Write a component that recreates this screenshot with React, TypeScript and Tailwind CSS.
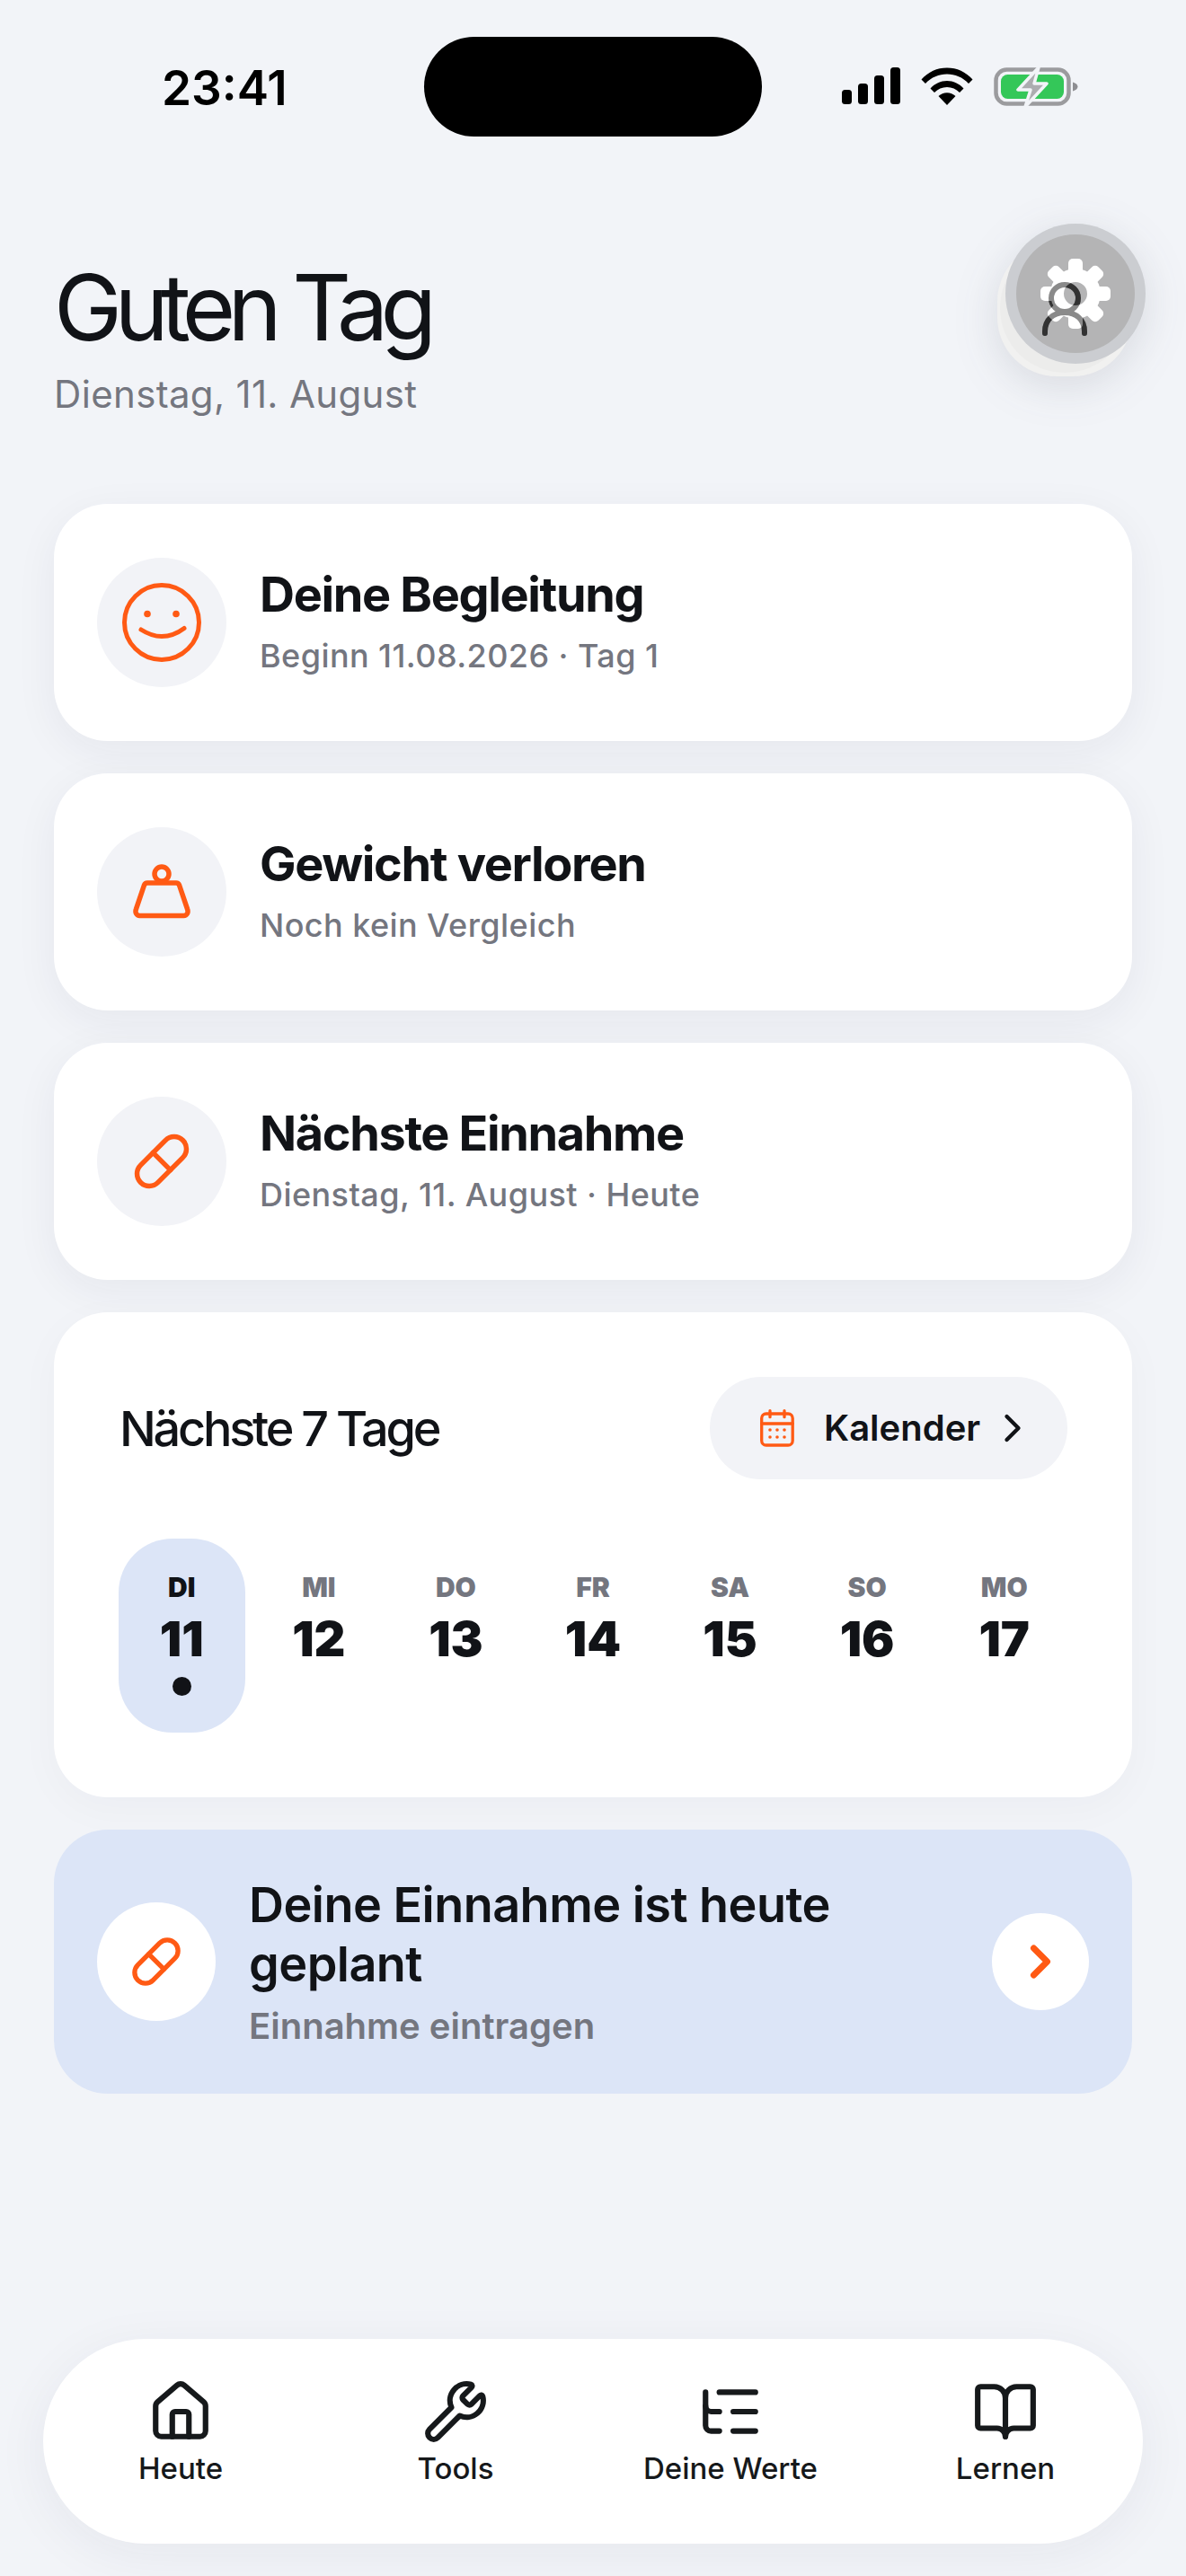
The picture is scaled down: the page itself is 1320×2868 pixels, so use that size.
import React from "react";
import { House, Wrench, ListTree, BookOpen, Pill, ChevronRight } from "lucide-react";

const ORANGE = "#FF5A14";

function SignalIcon() {
  return (
    <svg width="65" height="41" viewBox="0 0 65 41" fill="#000">
      <rect x="0" y="25" width="11" height="16" rx="3.5" />
      <rect x="18" y="18" width="11" height="23" rx="3.5" />
      <rect x="36" y="9" width="11" height="32" rx="3.5" />
      <rect x="54" y="0" width="11" height="41" rx="3.5" />
    </svg>
  );
}

function WifiIcon() {
  return (
    <svg width="58" height="42" viewBox="0 0 58 42" fill="#000">
      <path d="M0.5 13.5C8 5 18 0.5 29 0.5s21 4.5 28.500 13l-4.500 4.500C46.500 11 38 7.500 29 7.500S11.500 11 5 18Z" />
      <path d="M10.500 23.500C15.500 18 22 15 29 15s13.500 3 18.500 8.500L43 28c-3.800-3.900-8.700-6-14-6s-10.200 2.100-14 6Z" />
      <path d="M19.500 32c2.600-2.400 5.900-3.800 9.500-3.800s6.900 1.400 9.500 3.800L29 42Z" />
    </svg>
  );
}

function BatteryIcon() {
  return (
    <svg width="94" height="44" viewBox="0 0 94 44">
      <rect x="2.500" y="2.500" width="81" height="38" rx="12" fill="none" stroke="#9B9B9E" strokeWidth="4.500" />
      <rect x="8" y="8" width="70" height="27" rx="7.500" fill="#34C759" />
      <path d="M88 16.500c3.500 1 5.500 2.800 5.500 5s-2 4-5.500 5Z" fill="#8E8E92" />
      <path d="M50 0 27 25h14l-6 19 24-26H45Z" fill="#ACACB0" stroke="#F2F4F8" strokeWidth="3.500" strokeLinejoin="round" />
    </svg>
  );
}

function SmileIcon() {
  return (
    <svg width="88" height="88" viewBox="0 0 88 88" fill="none" stroke={ORANGE} strokeWidth="5" strokeLinecap="round">
      <circle cx="44" cy="44" r="41.500" />
      <circle cx="28" cy="34.500" r="3.800" fill={ORANGE} stroke="none" />
      <circle cx="60" cy="34.500" r="3.800" fill={ORANGE} stroke="none" />
      <path d="M21 52c7 4.500 15 7.500 23 7.500s17-3 25-9" />
    </svg>
  );
}

function WeightIcon() {
  return (
    <svg width="64" height="62" viewBox="0 0 64 62" fill="none" stroke={ORANGE} strokeWidth="5.500" strokeLinejoin="round" strokeLinecap="round">
      <circle cx="32" cy="11" r="8" />
      <path d="M16 21h32a4 4 0 0 1 3.500 2.400L60.500 50c1.500 4-.5 7.500-4 7.500h-49c-3.500 0-5.500-3.500-4-7.500l9-26.600A4 4 0 0 1 16 21Z" />
    </svg>
  );
}

function CalendarIcon() {
  return (
    <svg width="38" height="42" viewBox="0 0 38 42" fill="none" stroke={ORANGE} strokeWidth="3.300" strokeLinecap="round">
      <rect x="1.700" y="5" width="34.500" height="35" rx="5" />
      <path d="M11 1.700v7M27 1.700v7M1.700 16h34.500" />
      <g fill={ORANGE} stroke="none">
        <circle cx="11" cy="23" r="1.800" />
        <circle cx="19" cy="23" r="1.800" />
        <circle cx="27" cy="23" r="1.800" />
        <circle cx="11" cy="31" r="1.800" />
        <circle cx="19" cy="31" r="1.800" />
        <circle cx="27" cy="31" r="1.800" />
      </g>
    </svg>
  );
}

function PersonShape({ stroke }: { stroke: string }) {
  return (
    <g fill="none" stroke={stroke} strokeWidth="6" strokeLinecap="round">
      <circle cx="95" cy="102" r="15" />
      <path d="M73 141v-2c0-13 9-21 22-21s22 8 22 21v2" />
    </g>
  );
}

function AvatarOverlay() {
  const teeth = [0, 45, 90, 135, 180, 225, 270, 315];
  return (
    <div className="absolute left-[1090px] top-[230px] drop-shadow-[0_10px_24px_rgba(60,64,80,0.14)]">
      <svg width="200" height="200" viewBox="0 0 200 200">
        <rect x="20" y="40" width="150" height="149" rx="66" fill="#F1F1F0" />
        <circle cx="95" cy="113" r="72" fill="#ECECEB" />
        <circle cx="107" cy="97" r="78" fill="#C9CBD0" fillOpacity="0.97" />
        <circle cx="107" cy="97" r="66" fill="#B4B4B5" />
        <PersonShape stroke="#5C5C5C" />
        <g fill="#FFFFFF">
          <path
            fillRule="evenodd"
            d="M107 69a28 28 0 1 1 0 56 28 28 0 1 1 0-56Zm0 15a13 13 0 1 0 0 26 13 13 0 1 0 0-26Z"
          />
          {teeth.map((a) => (
            <rect key={a} x="99" y="58" width="16" height="20" rx="5" transform={`rotate(${a} 107 97)`} />
          ))}
        </g>
        <g className="mix-blend-multiply">
          <PersonShape stroke="#8A8A8A" />
        </g>
      </svg>
    </div>
  );
}

function InfoCard({ icon, title, sub }: { icon: React.ReactNode; title: string; sub: string }) {
  return (
    <div className="flex h-[264px] items-center gap-[37px] rounded-[60px] bg-white pl-12 shadow-[0_12px_48px_rgba(30,34,60,0.06)]">
      <div className="flex h-[144px] w-[144px] items-center justify-center rounded-full bg-[#F2F3F7]">{icon}</div>
      <div className="flex flex-col gap-[14px]">
        <div className="text-[54px] font-bold leading-[60px] tracking-[-0.025em] text-[#111317]">{title}</div>
        <div className="text-[36px] font-medium leading-[48px] tracking-[0.012em] text-[#74767F]">{sub}</div>
      </div>
    </div>
  );
}

const days = [
  ["DI", "11"],
  ["MI", "12"],
  ["DO", "13"],
  ["FR", "14"],
  ["SA", "15"],
  ["SO", "16"],
  ["MO", "17"],
];

function NavItem({ icon, label }: { icon: React.ReactNode; label: string }) {
  return (
    <div className="flex flex-col items-center text-[#16191B]">
      {icon}
      <div className="mt-[6px] text-[33px] font-medium leading-[40px]">{label}</div>
    </div>
  );
}

export default function App() {
  return (
    <div
      className="relative flex h-[2868px] w-[1320px] flex-col overflow-hidden bg-[#F2F4F8]"
      style={{ fontFamily: "Inter, 'Noto Sans', sans-serif" }}
    >
      <div className="grid h-[152px] grid-cols-[472px_376px_1fr] pt-[41px]">
        <div className="pl-[180px] pt-[26px] text-[53px] font-semibold leading-[62px] text-black">23:41</div>
        <div className="h-[111px] rounded-full bg-black" />
        <div className="flex items-start gap-[23px] pl-[89px] pt-[34px]">
          <SignalIcon />
          <WifiIcon />
          <BatteryIcon />
        </div>
      </div>

      <div className="px-[60px] pt-[130px]">
        <h1 className="text-[102px] font-normal leading-[120px] tracking-[-0.085em] text-[#111317]">Guten Tag</h1>
        <div className="mt-[12px] text-[42px] leading-[50px] tracking-[0.008em] text-[#74767F]">Dienstag, 11. August</div>
      </div>

      <div className="flex flex-col gap-9 px-[60px] pt-[97px]">
        <InfoCard icon={<SmileIcon />} title="Deine Begleitung" sub="Beginn 11.08.2026 · Tag 1" />
        <InfoCard icon={<WeightIcon />} title="Gewicht verloren" sub="Noch kein Vergleich" />
        <InfoCard icon={<Pill size={66} color={ORANGE} strokeWidth={2} />} title="Nächste Einnahme" sub="Dienstag, 11. August · Heute" />

        <div className="rounded-[60px] bg-white px-[72px] pb-[72px] pt-[72px] shadow-[0_12px_48px_rgba(30,34,60,0.03)]">
          <div className="flex h-[114px] items-center justify-between">
            <div className="pl-[1px] text-[54px] font-medium tracking-[-0.06em] text-[#111317]">Nächste 7 Tage</div>
            <div className="flex h-[114px] w-[398px] items-center rounded-full bg-[#F2F3F7] pl-[56px]">
              <CalendarIcon />
              <span className="ml-[33px] text-[40px] font-semibold text-[#111317]">Kalender</span>
              <ChevronRight size={52} strokeWidth={2} color="#111317" className="ml-[10px]" />
            </div>
          </div>
          <div className="mt-[66px] grid grid-cols-7 gap-3">
            {days.map(([d, n], i) => (
              <div key={d} className={`flex h-[216px] flex-col items-center rounded-[60px] pt-[36px] ${i === 0 ? "bg-[#DCE5F7]" : ""}`}>
                <div className={`text-[30px] font-black leading-[36px] ${i === 0 ? "text-[#111317]" : "text-[#74767F]"}`}>{d}</div>
                <div className="mt-[10px] text-[54px] font-black leading-[60px] text-[#111317]">{n}</div>
                {i === 0 && <div className="mt-[12px] h-[21px] w-[21px] rounded-full bg-[#111317]" />}
              </div>
            ))}
          </div>
        </div>

        <div className="flex h-[294px] items-center rounded-[60px] bg-[#DCE5F7] pl-12 pr-12">
          <div className="flex h-[132px] w-[132px] shrink-0 items-center justify-center rounded-full bg-white">
            <Pill size={58} color={ORANGE} strokeWidth={2.2} />
          </div>
          <div className="ml-[37px] flex-1">
            <div className="w-[700px] text-[54px] font-semibold leading-[66px] tracking-[-0.01em] text-[#111317]">Deine Einnahme ist heute geplant</div>
            <div className="mt-[12px] text-[40px] font-semibold leading-[48px] text-[#74767F]">Einnahme eintragen</div>
          </div>
          <div className="flex h-[108px] w-[108px] shrink-0 items-center justify-center rounded-full bg-white">
            <ChevronRight size={60} color={ORANGE} strokeWidth={2.8} />
          </div>
        </div>
      </div>

      <div className="mx-12 mb-9 mt-auto grid h-[228px] grid-cols-4 rounded-full bg-white pt-[44px] shadow-[0_12px_60px_rgba(30,34,60,0.06)]">
        <NavItem icon={<House size={74} strokeWidth={2} />} label="Heute" />
        <NavItem icon={<Wrench size={74} strokeWidth={2} />} label="Tools" />
        <NavItem icon={<ListTree size={74} strokeWidth={2} />} label="Deine Werte" />
        <NavItem icon={<BookOpen size={74} strokeWidth={2} />} label="Lernen" />
      </div>

      <AvatarOverlay />
    </div>
  );
}
